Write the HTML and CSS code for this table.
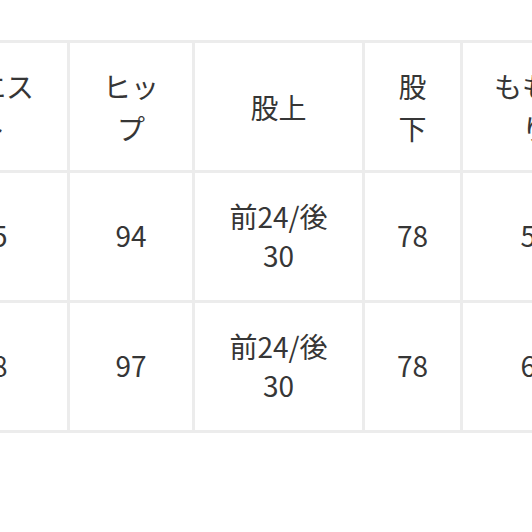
FILE: index.html
```html
<!DOCTYPE html>
<html lang="ja">
<head>
<meta charset="utf-8">
<link rel="stylesheet" href="styles.css">
</head>
<body>
<div class="viewport">
  <div class="sheet">
    <div class="cell head">ウエス<br>ト</div>
    <div class="cell head">ヒッ<br>プ</div>
    <div class="cell head">股上</div>
    <div class="cell head">股<br>下</div>
    <div class="cell head">もも周<br>り</div>

    <div class="cell">75</div>
    <div class="cell">94</div>
    <div class="cell">前24/後<br>30</div>
    <div class="cell">78</div>
    <div class="cell">57</div>

    <div class="cell">78</div>
    <div class="cell">97</div>
    <div class="cell">前24/後<br>30</div>
    <div class="cell">78</div>
    <div class="cell">60</div>
  </div>
</div>
</body>
</html>
```

FILE: styles.css
```css
html, body {
  margin: 0;
  padding: 0;
  background: #ffffff;
}

.viewport {
  width: 532px;
  height: 532px;
  overflow: hidden;
  padding-top: 40px;
  box-sizing: border-box;
}

.sheet {
  display: grid;
  grid-template-columns: 150px 122px 167px 95px 146px;
  grid-auto-rows: 127px;
  gap: 3px;
  padding: 3px;
  background: #ececec;
  width: max-content;
  margin-left: -86px;
}

.cell {
  background: #ffffff;
  display: flex;
  align-items: center;
  justify-content: center;
  text-align: center;
  font-family: "Noto Sans CJK JP", "Noto Sans", sans-serif;
  font-size: 28px;
  font-weight: 400;
  line-height: 39px;
  padding-bottom: 2px;
  color: #363636;
}

.head {
  line-height: 42px;
  padding-bottom: 0;
}
```
